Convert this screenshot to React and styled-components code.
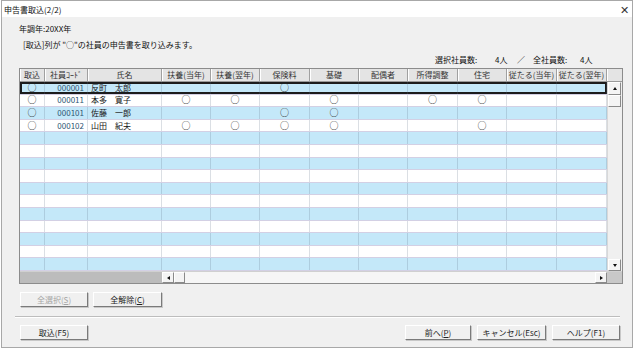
import React from "react";
import styled, { createGlobalStyle } from "styled-components";

const Global = createGlobalStyle`
  html, body { margin: 0; padding: 0; background: #fff; }
  body { font-family: "Noto Sans CJK JP", "Noto Sans", sans-serif; font-size: 8px; color: #111; }
`;

const COLS = [25, 43, 74, 49, 49, 50, 49, 49, 50, 49, 50, 50];
const TEMPLATE = COLS.map((w) => w + "px").join(" ");
const HEADS = ["取込", "社員ｺｰﾄﾞ", "氏名", "扶養(当年)", "扶養(翌年)", "保険料", "基礎", "配偶者", "所得調整", "住宅", "従たる(当年)", "従たる(翌年)"];
const O = "○";
const DATA = [
  [O, "000001", "反町　太郎", "", "", O, "", "", "", "", "", ""],
  [O, "000011", "本多　寛子", O, O, "", O, "", O, O, "", ""],
  [O, "000101", "佐藤　一郎", "", "", O, O, "", "", "", "", ""],
  [O, "000102", "山田　紀夫", O, O, O, O, "", "", O, "", ""],
];
const ROWS = Array.from({ length: 15 }, (_, i) => DATA[i] || Array(12).fill(""));

const Window = styled.div`
  width: 630px;
  height: 346px;
  margin-left: 1px;
  border: 1px solid #a8a8a8;
  background: #f0f0f0;
  display: flex;
  flex-direction: column;
`;

const TitleBar = styled.div`
  height: 16px;
  background: #fff;
  display: flex;
  align-items: center;
  justify-content: space-between;
  padding: 0 3px 0 2px;
  font-size: 8px;
`;

const Close = styled.span`
  font-size: 11px;
  color: #333;
  line-height: 1;
`;

const Body = styled.div`
  flex: 1;
  display: flex;
  flex-direction: column;
  padding: 0 12px 0 17px;
`;

const Line = styled.div`
  line-height: 10px;
  height: 10px;
  margin-top: ${(p) => p.$mt}px;
  padding-left: ${(p) => p.$pl || 0}px;
`;

const Counts = styled.div`
  display: grid;
  grid-template-columns: 60px 22px 16px 47px 15px;
  justify-content: end;
  padding-right: 25px;
  line-height: 10px;
  height: 10px;
  margin-top: 5px;
`;

const Frame = styled.div`
  margin-top: 3px;
  width: 602px;
  border: 1px solid #8c8c8c;
  background: #fff;
  display: flex;
  flex-direction: column;
`;

const HeadRow = styled.div`
  display: grid;
  grid-template-columns: ${TEMPLATE} 15px;
  height: 12px;
  background: #e4e4e4;
  border-bottom: 1px solid #9a9a9a;
`;

const HeadCell = styled.div`
  text-align: center;
  line-height: 12px;
  color: #333;
  white-space: nowrap;
  overflow: hidden;
  border-right: 1px solid #a0a0a0;
  box-shadow: inset 1px 0 0 #fff;
  &:last-child { border-right: none; }
`;

const Middle = styled.div`
  display: flex;
  height: 189px;
`;

const Rows = styled.div`
  width: 587px;
  display: grid;
  grid-template-rows: repeat(15, 1fr);
`;

const Row = styled.div`
  display: grid;
  grid-template-columns: ${TEMPLATE};
  background: ${(p) => (p.$blue ? "#c4e8f9" : "#fff")};
  border-bottom: 1px solid #d3d0e4;
  box-shadow: ${(p) => (p.$sel ? "inset 0 0 0 2px #1c1c1c" : "none")};
`;

const Cell = styled.div`
  border-right: 1px solid rgba(90, 110, 130, 0.22);
  display: flex;
  align-items: center;
  justify-content: ${(p) => (p.$align === "right" ? "flex-end" : p.$align === "left" ? "flex-start" : "center")};
  white-space: nowrap;
  padding: 0 3px;
  min-width: 0;
  color: ${(p) => (p.$code ? "#2e5573" : p.$circle ? "#2a2a2a" : "#151515")};
  font-size: ${(p) => (p.$circle ? 9 : 8)}px;
  line-height: 10px;
`;

const VScroll = styled.div`
  width: 15px;
  display: flex;
  flex-direction: column;
  background: #f0f0f0;
  border-left: 1px solid #d8d8d8;
`;

const ArrowBtn = styled.div`
  width: ${(p) => p.$w || 13}px;
  height: ${(p) => p.$h || 12}px;
  background: #f4f4f4;
  border: 1px solid;
  border-color: #fff #8a8a8a #8a8a8a #fff;
  box-sizing: border-box;
  display: flex;
  align-items: center;
  justify-content: center;
  flex: none;
`;

const Tri = styled.span`
  width: 0;
  height: 0;
  border: 2px solid transparent;
  ${(p) => (p.$dir === "up" ? "border-bottom: 3px solid #111; border-top: 0;" : "")}
  ${(p) => (p.$dir === "down" ? "border-top: 3px solid #111; border-bottom: 0;" : "")}
  ${(p) => (p.$dir === "left" ? "border-right: 3px solid #111; border-left: 0;" : "")}
  ${(p) => (p.$dir === "right" ? "border-left: 3px solid #111; border-right: 0;" : "")}
`;

const Track = styled.div`
  flex: 1;
`;

const HScroll = styled.div`
  display: flex;
  height: 11px;
  border-top: 1px solid #d0d0d0;
  background: #f6f6f6;
`;

const Frozen = styled.div`
  width: 142px;
  background: #bcbcbc;
`;

const Corner = styled.div`
  width: 15px;
  background: #c8c8c8;
`;

const ButtonRow = styled.div`
  display: flex;
  gap: ${(p) => p.$gap || 5}px;
  margin-top: ${(p) => p.$mt}px;
  padding-left: 1px;
`;

const Button = styled.div`
  width: ${(p) => p.$w}px;
  height: 15px;
  box-sizing: border-box;
  border: 1px solid;
  border-color: #fff #7a7a7a #7a7a7a #fff;
  box-shadow: 1px 1px 0 #c8c8c8;
  display: flex;
  align-items: center;
  justify-content: center;
  color: ${(p) => (p.$disabled ? "#a6a6a6" : "#222")};
  font-size: 8px;
`;

const Separator = styled.div`
  margin: 9px 0 0 -4px;
  border-top: 1px solid #bdbdbd;
  border-bottom: 1px solid #fff;
`;

const Spacer = styled.div`
  flex: 1;
`;

const App = () => {
  const align = (i) => (i === 1 ? "right" : i === 2 ? "left" : "center");
  return (
    <>
      <Global />
      <Window>
        <TitleBar>
          <span>申告書取込(2/2)</span>
          <Close>✕</Close>
        </TitleBar>
        <Body>
          <Line $mt={7} $pl={0}>年調年:20XX年</Line>
          <Line $mt={6} $pl={4}>[取込]列が "○"の社員の申告書を取り込みます。</Line>
          <Counts>
            <span>選択社員数:</span>
            <span>4人</span>
            <span>／</span>
            <span>全社員数:</span>
            <span>4人</span>
          </Counts>
          <Frame>
            <HeadRow>
              {HEADS.map((h) => (
                <HeadCell key={h}>{h}</HeadCell>
              ))}
              <HeadCell />
            </HeadRow>
            <Middle>
              <Rows>
                {ROWS.map((r, i) => (
                  <Row key={i} $blue={i % 2 === 0} $sel={i === 0}>
                    {r.map((v, j) => (
                      <Cell key={j} $align={align(j)} $code={j === 1} $circle={v === O}>
                        {v}
                      </Cell>
                    ))}
                  </Row>
                ))}
              </Rows>
              <VScroll>
                <ArrowBtn $h={13}><Tri $dir="up" /></ArrowBtn>
                <ArrowBtn $h={12} />
                <Track />
                <ArrowBtn $h={12}><Tri $dir="down" /></ArrowBtn>
              </VScroll>
            </Middle>
            <HScroll>
              <Frozen />
              <ArrowBtn $w={12} $h={11}><Tri $dir="left" /></ArrowBtn>
              <ArrowBtn $w={11} $h={11} />
              <Track />
              <ArrowBtn $w={12} $h={11}><Tri $dir="right" /></ArrowBtn>
              <Corner />
            </HScroll>
          </Frame>
          <ButtonRow $mt={8} $gap={5}>
            <Button $w={68} $disabled>全選択(<u>S</u>)</Button>
            <Button $w={69}>全解除(<u>C</u>)</Button>
          </ButtonRow>
          <Separator />
          <ButtonRow $mt={7} $gap={6}>
            <Button $w={68}>取込(F5)</Button>
            <Spacer />
            <Button $w={66}>前へ(<u>P</u>)</Button>
            <Button $w={69}>キャンセル(Esc)</Button>
            <Button $w={68}>ヘルプ(F1)</Button>
          </ButtonRow>
        </Body>
      </Window>
    </>
  );
};

export default App;
